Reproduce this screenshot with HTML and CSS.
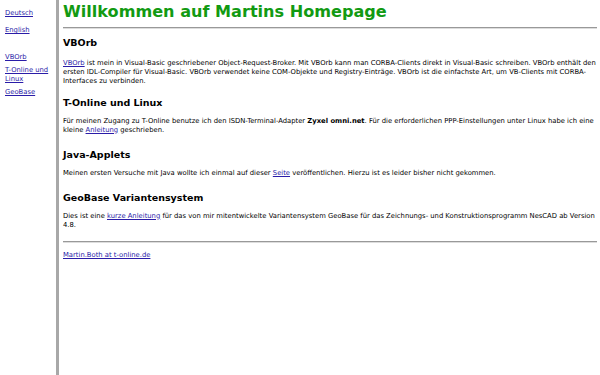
FILE: index.html
```html
<!DOCTYPE html>
<html lang="de">
<head>
    <meta charset="UTF-8">
    <title>Martins Homepage</title>
    <link rel="stylesheet" href="styles.css">
</head>
<body>
<div class="frames">
    <div class="nav">
        <a href="#">Deutsch</a>
        <a href="#">English</a>
        <a href="#" class="gap">VBOrb</a>
        <a href="#">T-Online und Linux</a>
        <a href="#">GeoBase</a>
    </div>
    <div class="main">
        <h1>Willkommen auf Martins Homepage</h1>
        <hr>
        <h2>VBOrb</h2>
        <p class="first"><a href="#">VBOrb</a> ist mein in Visual-Basic geschriebener Object-Request-Broker. Mit VBOrb kann man CORBA-Clients direkt in Visual-Basic schreiben. VBOrb enthält den ersten IDL-Compiler für Visual-Basic. VBOrb verwendet keine COM-Objekte und Registry-Einträge. VBOrb ist die einfachste Art, um VB-Clients mit CORBA-Interfaces zu verbinden.</p>

        <h2>T-Online und Linux</h2>
        <p>Für meinen Zugang zu T-Online benutze ich den ISDN-Terminal-Adapter <b>Zyxel omni.net</b>. Für die erforderlichen PPP-Einstellungen unter Linux habe ich eine kleine <a href="#">Anleitung</a> geschrieben.</p>

        <h2>Java-Applets</h2>
        <p>Meinen ersten Versuche mit Java wollte ich einmal auf dieser <a href="#">Seite</a> veröffentlichen. Hierzu ist es leider bisher nicht gekommen.</p>

        <h2>GeoBase Variantensystem</h2>
        <p class="last">Dies ist eine <a href="#">kurze Anleitung</a> für das von mir mitentwickelte Variantensystem GeoBase für das Zeichnungs- und Konstruktionsprogramm NesCAD ab Version 4.8.</p>
        <hr>
        <p class="mail"><a href="#">Martin.Both at t-online.de</a></p>
    </div>
</div>
</body>
</html>
```

FILE: styles.css
```css
body {
    margin: 0;
    font-family: "DejaVu Sans", sans-serif;
    font-size: 6.8px;
    line-height: 9px;
    color: #000;
    background: #fff;
}

a {
    color: #2a1ca8;
}

.frames {
    display: flex;
    height: 375px;
}

.nav {
    width: 51px;
    padding: 9px 0 0 5px;
    display: flex;
    flex-direction: column;
}

.nav a {
    margin-bottom: 4px;
}

.nav a:first-child {
    margin-bottom: 8px;
}

.nav a.gap {
    margin-top: 14px;
}

.main {
    flex: 1;
    border-left: 3px solid #a8a8a8;
    padding: 0 3px 0 4px;
}

h1 {
    color: #129a12;
    font-size: 16.1px;
    line-height: 20px;
    margin: 2px 0 0;
}

hr {
    border: none;
    border-top: 1px solid #999;
    border-bottom: 1px solid #ddd;
    margin: 5px 0 0;
}

h2 {
    font-size: 9.5px;
    line-height: 12px;
    margin: 8px 0 0;
}

p {
    margin: 7.5px 0 14.5px;
}

p.first {
    margin-top: 9.5px;
    margin-bottom: 11.5px;
}

p.last {
    margin-bottom: 11px;
}

.mail {
    margin-top: 8.5px;
}
```
